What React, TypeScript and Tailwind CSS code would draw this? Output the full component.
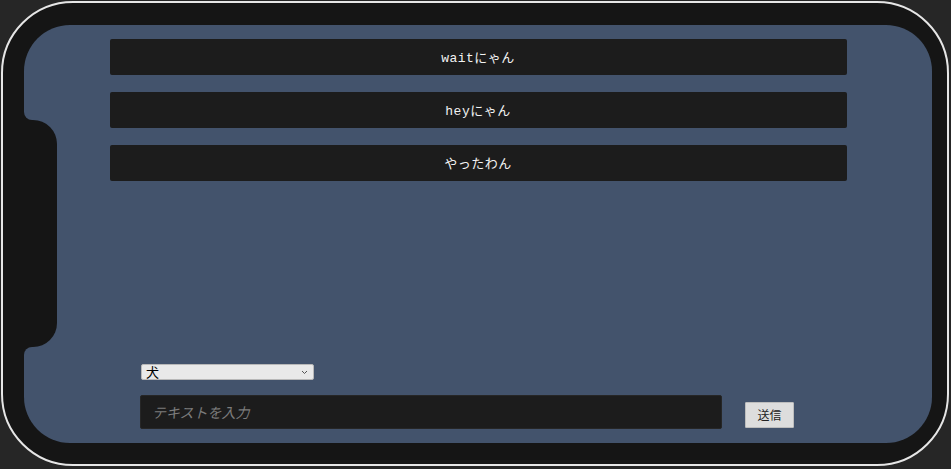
import React from "react";

const messages = ["waitにゃん", "heyにゃん", "やったわん"];

export default function App() {
  return (
    <div className="w-[951px] h-[469px] bg-[#262626] pt-[1px] pl-[1px] overflow-hidden">
      <div className="w-[948px] h-[465px] rounded-[72px] border-2 border-[#e6e6e6] bg-[#151515] pt-[22px] pl-[21px] pr-[14px] pb-[21px]">
        <div className="relative w-[908px] h-[418px] rounded-[46px] bg-[#43536c] flex flex-col">
          {/* notch */}
          <div className="absolute left-0 top-[87px] w-[8px] h-[8px] bg-[#151515]">
            <div className="w-[8px] h-[8px] bg-[#43536c] rounded-bl-[8px]" />
          </div>
          <div className="absolute left-0 top-[95px] w-[33px] h-[227px] bg-[#151515] rounded-r-[24px]" />
          <div className="absolute left-0 top-[322px] w-[8px] h-[8px] bg-[#151515]">
            <div className="w-[8px] h-[8px] bg-[#43536c] rounded-tl-[8px]" />
          </div>

          <div className="mx-auto mt-[14px] w-[737px] flex flex-col gap-[17px]">
            {messages.map((m) => (
              <div
                key={m}
                className="h-[36px] bg-[#1c1c1c] rounded-[2px] flex items-center justify-center pt-[3px] text-[13px] text-[#f2f2f2] font-['Liberation_Mono','Noto_Sans_CJK_JP',monospace] tracking-[0.5px]"
              >
                {m}
              </div>
            ))}
          </div>

          <div className="flex-1" />

          <div className="pl-[116px] pb-[14px] flex flex-col">
            <div className="ml-[1px] w-[173px] h-[16px] bg-[#e9e9e9] border border-[#b8b8b8] rounded-[2px] pl-[4px] pr-[5px] flex items-center justify-between text-[13px] leading-[14px] text-black font-['Noto_Sans_CJK_JP',sans-serif]">
              <span>犬</span>
              <svg width="7" height="5" viewBox="0 0 7 5">
                <path d="M1 1 L3.5 3.5 L6 1" stroke="#555" strokeWidth="1" fill="none" />
              </svg>
            </div>
            <div className="mt-[15px] flex items-end">
              <input
                type="text"
                placeholder="テキストを入力"
                className="w-[582px] h-[34px] bg-[#1c1c1c] border border-[#262626] rounded-[2px] pl-[11px] pr-[12px] text-[14px] text-[#e0e0e0] placeholder:text-[#7c7c7c] placeholder:italic italic font-['Noto_Sans_CJK_JP',sans-serif] outline-none"
              />
              <button className="ml-[23px] mb-[1px] w-[49px] h-[26px] bg-[#dddddd] border border-[#bdbdbd] rounded-[1px] text-[12px] text-[#222] font-['Noto_Sans_CJK_JP',sans-serif] flex items-center justify-center">
                送信
              </button>
            </div>
          </div>
        </div>
      </div>
    </div>
  );
}
